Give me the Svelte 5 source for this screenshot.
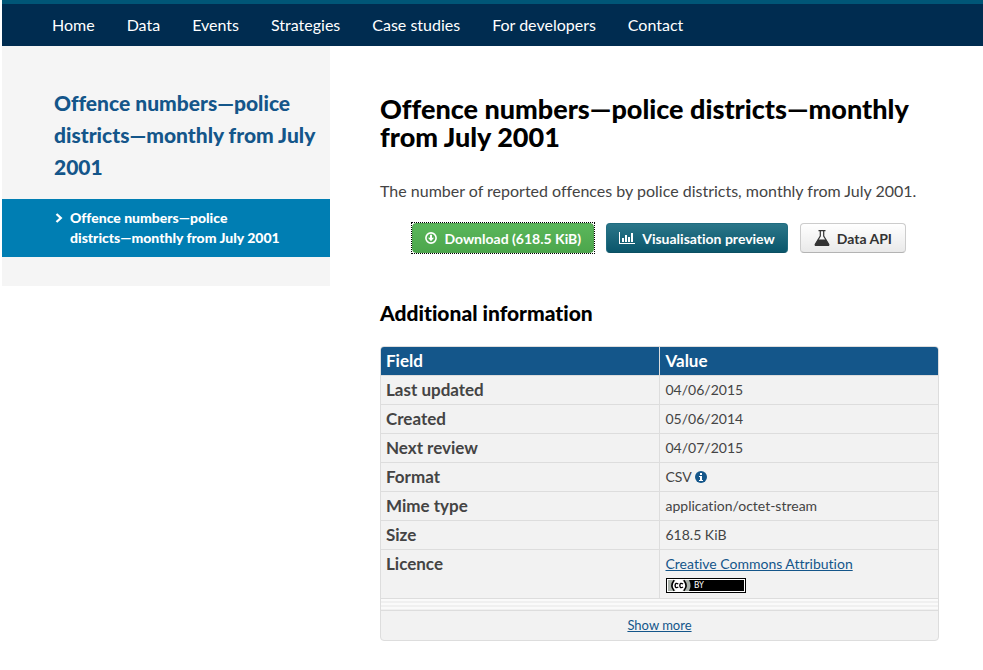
<script>
  const nav = ['Home', 'Data', 'Events', 'Strategies', 'Case studies', 'For developers', 'Contact'];
  const rows = [
    ['Last updated', '04/06/2015'],
    ['Created', '05/06/2014'],
    ['Next review', '04/07/2015'],
    ['Format', 'CSV'],
    ['Mime type', 'application/octet-stream'],
    ['Size', '618.5 KiB'],
    ['Licence', 'Creative Commons Attribution']
  ];
</script>

<div class="page">
  <header>
    <nav aria-label="Main">
      {#each nav as item}
        <a href="#top">{item}</a>
      {/each}
    </nav>
  </header>

  <div class="columns">
    <aside>
      <h2><a href="#dataset">Offence numbers—police districts—monthly from July 2001</a></h2>
      <a class="current" href="#resource">
        <svg width="8" height="10" viewBox="0 0 8 10" aria-hidden="true"><path d="M1.5 1 L5.8 5 L1.5 9" fill="none" stroke="#fff" stroke-width="2.3" /></svg>
        <span>Offence numbers—police <span class="together">districts—monthly</span> from July 2001</span>
      </a>
    </aside>

    <main>
      <h1>Offence numbers—police districts—monthly from July 2001</h1>
      <p>The number of reported offences by police districts, monthly from July 2001.</p>

      <div class="actions">
        <button class="download">
          <svg width="12" height="12" viewBox="0 0 12 12" aria-hidden="true">
            <circle cx="6" cy="6" r="5.1" fill="none" stroke="#fff" stroke-width="1.6" />
            <path d="M5 2.8h2v3h2L6 9.2 3 5.8h2z" fill="#fff" />
          </svg>
          Download (618.5 KiB)
        </button>
        <button class="preview">
          <svg width="16" height="12" viewBox="0 0 16 12" aria-hidden="true">
            <path d="M0 0h1v11h15v1H0zM3 6h2v4H3zM6 3h2v7H6zM9 5h2v5H9zM12 1h2v9h-2z" fill="#fff" />
          </svg>
          Visualisation preview
        </button>
        <button class="api">
          <svg width="16" height="16" viewBox="0 0 16 16" aria-hidden="true">
            <path d="M4.5 .6h7M6.300 1v5L1.300 14.200Q.8 15.400 2 15.400h12q1.200 0 .7-1.200L9.700 6V1" fill="none" stroke="#333" stroke-width="1.200" />
            <path d="M4 9.500h8l3 5.500H1z" fill="#333" />
          </svg>
          Data API
        </button>
      </div>

      <h3>Additional information</h3>

      <div class="panel">
        <table>
          <thead>
            <tr><th scope="col">Field</th><th scope="col">Value</th></tr>
          </thead>
          <tbody>
            {#each rows as [field, value]}
              <tr>
                <th scope="row">{field}</th>
                <td>
                  {#if field === 'Licence'}
                    <a href="#licence">{value}</a>
                    <svg class="badge" width="80" height="15" viewBox="0 0 80 15" role="img" aria-label="CC BY">
                      <rect width="80" height="15" fill="#000" />
                      <rect x="1" y="1" width="78" height="13" fill="#fff" />
                      <rect x="2" y="2" width="76" height="11" fill="#000" />
                      <path d="M2 2h21q3 5.500 0 11H2z" fill="#aab2ab" />
                      <circle cx="13" cy="7.500" r="6.500" fill="#fff" />
                      <path d="M8.200 2.200q-4.500 5.300 0 10.600M17.800 2.200q4.500 5.300 0 10.600" fill="none" stroke="#000" stroke-width="1.600" />
                      <path d="M12.300 6q-3-1.800-3.200 1.500.2 3.300 3.200 1.500M17 6q-3-1.800-3.200 1.500.2 3.300 3.200 1.500" fill="none" stroke="#000" stroke-width="1.400" />
                      <text x="28" y="10">BY</text>
                    </svg>
                  {:else if field === 'Format'}
                    {value}<svg class="info" width="12" height="12" viewBox="0 0 12 12" role="img" aria-label="About this format"><circle cx="6" cy="6" r="6" fill="#14568a" /><path d="M5 2h2v2H5zM4 5h3v4h1v1H4V9h1V6H4z" fill="#fff" /></svg>
                  {:else}
                    {value}
                  {/if}
                </td>
              </tr>
            {/each}
          </tbody>
        </table>
        <div class="stripes"></div>
        <div class="more"><a href="#more">Show more</a></div>
      </div>
    </main>
  </div>
</div>

<style>
  :global(body) {
    background: #fff;
  }
  .page {
    margin-left: 2px;
    font-family: Lato, 'Liberation Sans', sans-serif;
    font-size: 16px;
    font-variant-ligatures: none;
    color: #444;
  }
  header {
    background: #002c50;
    border-top: 4px solid #005677;
  }
  nav {
    display: flex;
    gap: 32px;
    padding: 9px 50px;
    line-height: 24px;
  }
  nav a {
    color: #fff;
    text-decoration: none;
  }
  .columns {
    display: flex;
    align-items: flex-start;
  }
  aside {
    flex: 0 0 328px;
    background: #f5f5f5;
    padding: 41px 0 29px;
  }
  h1, h2, h3, p {
    margin: 0;
  }
  h2 {
    padding: 0 0 16px 52px;
    font-size: 21px;
    line-height: 32px;
    font-weight: 900;
  }
  h2 a {
    color: #14568a;
    text-decoration: none;
  }
  .current {
    display: flex;
    gap: 7px;
    padding: 9px 40px 9px 53px;
    background: #007eb3;
    color: #fff;
    font-size: 14px;
    font-weight: 900;
    line-height: 20px;
    text-decoration: none;
  }
  .current svg {
    flex: none;
    margin-top: 5px;
  }
  .together {
    white-space: nowrap;
  }
  main {
    flex: 1;
    padding: 49px 44px 30px 50px;
  }
  h1 {
    font-size: 27px;
    line-height: 28px;
    font-weight: 900;
    color: #000;
  }
  p {
    margin-top: 28px;
    line-height: 24px;
  }
  .actions {
    display: flex;
    justify-content: flex-end;
    gap: 12px;
    margin: 20px 33px 0 0;
  }
  button {
    display: flex;
    align-items: center;
    gap: 7px;
    height: 30px;
    padding: 0 12px;
    border: 1px solid;
    border-radius: 4px;
    font-family: inherit;
    font-size: 14px;
    font-weight: 700;
    font-variant-ligatures: none;
    color: #fff;
    white-space: nowrap;
  }
  .download {
    position: relative;
    background: linear-gradient(#5bb75b, #4ca64c);
    border-color: #51a351;
  }
  .download::after {
    content: '';
    position: absolute;
    inset: -2px;
    border: 1px dotted #000;
  }
  .preview {
    background: linear-gradient(#2b7689, #0a566b);
    border-color: #206c80 #206c80 #0a4f62;
  }
  .api {
    padding: 0 13px;
    background: linear-gradient(#fff, #e9e9e9);
    border-color: #ccc #ccc #b3b3b3;
    color: #333;
  }
  h3 {
    margin: 46px 0 19px;
    font-size: 21px;
    line-height: 28px;
    font-weight: 900;
    color: #000;
  }
  .panel {
    border: 1px solid #ddd;
    border-radius: 4px;
    background: #f2f2f2;
    overflow: hidden;
  }
  table {
    width: 100%;
    table-layout: fixed;
    border-collapse: separate;
    border-spacing: 0;
  }
  th, td {
    padding: 4px 6px;
    border-bottom: 1px solid #ddd;
    text-align: left;
    vertical-align: top;
    line-height: 20px;
  }
  th {
    font-size: 17px;
    font-weight: 700;
  }
  td {
    font-size: 14px;
  }
  th:first-child {
    padding-left: 5px;
    border-right: 1px solid #ddd;
  }
  thead th {
    background: #14568a;
    color: #fff;
  }
  td a, .more a {
    color: #14568a;
    text-decoration: underline;
  }
  .info {
    margin-left: 3px;
    vertical-align: -1px;
  }
  .badge {
    display: block;
    margin: 4px 0 1px;
  }
  .badge text {
    font: 8px 'DejaVu Sans', sans-serif;
    fill: #fff;
  }
  .stripes {
    height: 11px;
    background: repeating-linear-gradient(#fafafa 0 2px, #f0f0f0 2px 4px);
    border-bottom: 1px solid #ddd;
  }
  .more {
    padding: 4px 0 5px;
    text-align: center;
    font-size: 13px;
    line-height: 20px;
  }
</style>
